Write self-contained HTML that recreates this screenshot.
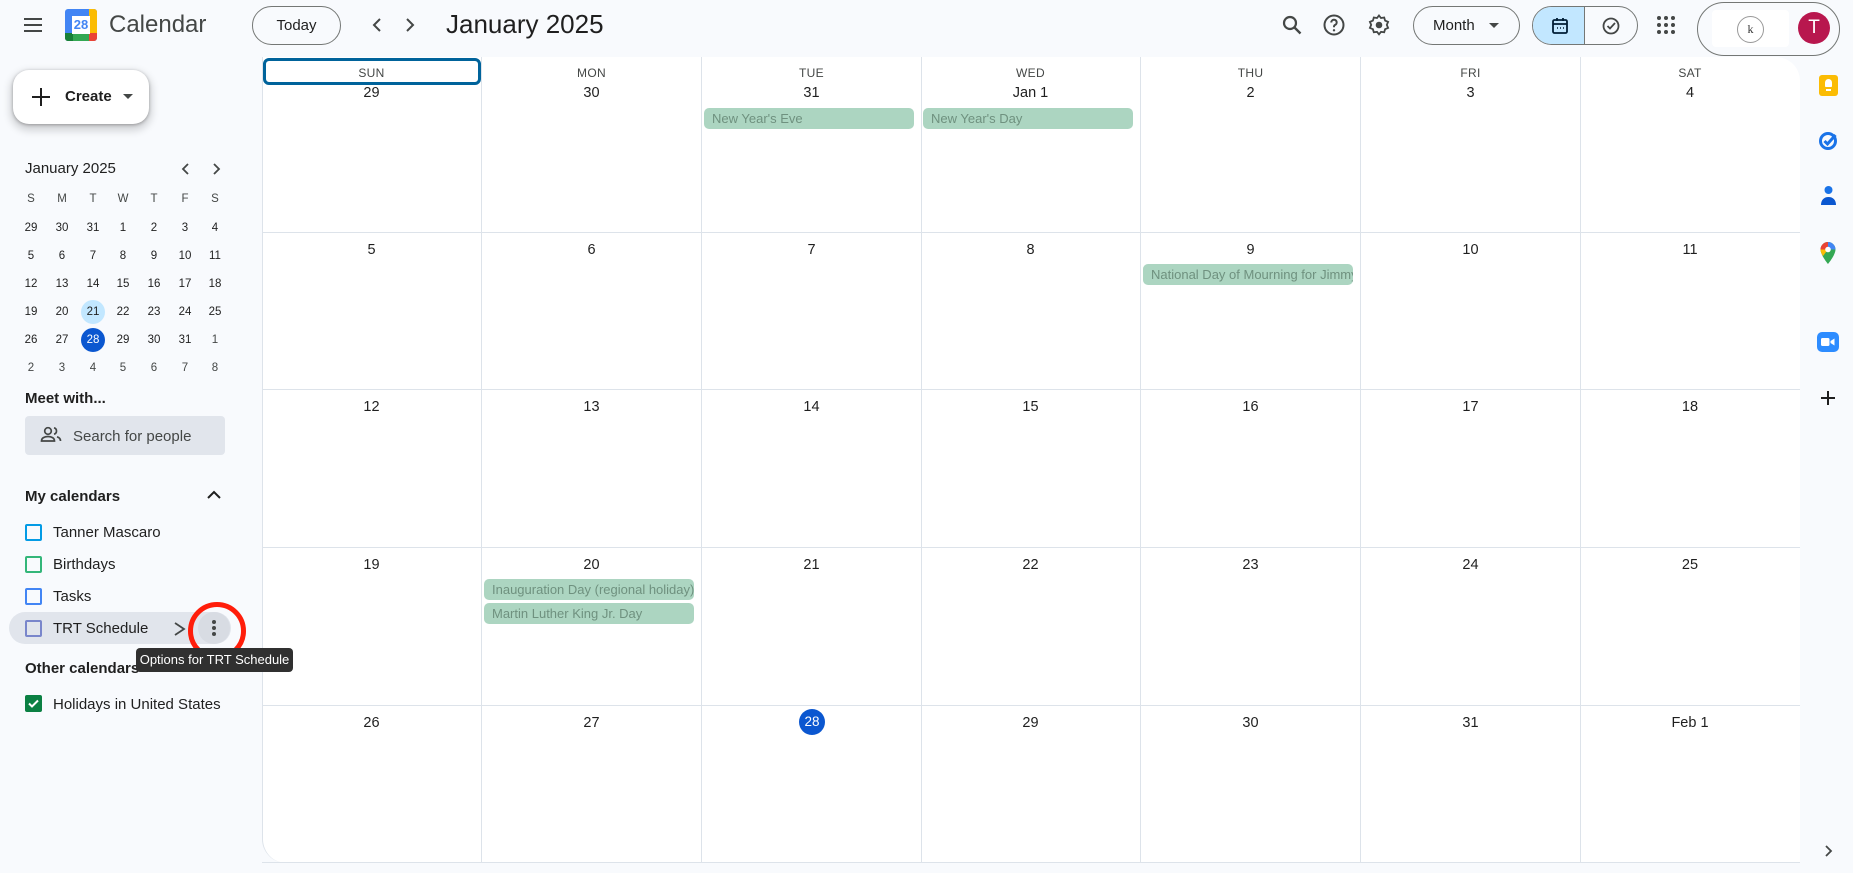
<!DOCTYPE html>
<html><head><meta charset="utf-8"><style>
*{box-sizing:border-box;margin:0;padding:0}
body{width:1853px;height:873px;overflow:hidden;background:#f8fafd;font-family:"Liberation Sans",Arial,sans-serif;color:#1f1f1f;position:relative}
.a{position:absolute}
.btn{position:absolute;border:1px solid #747775;border-radius:20px;display:flex;align-items:center;justify-content:center;font-size:15px;color:#1f1f1f}
.cell{position:absolute;width:220px;border-right:1px solid #dde3ea;border-bottom:1px solid #dde3ea;text-align:center}
.dn{font-size:12px;color:#444746;position:absolute;left:0;right:0;top:9px;letter-spacing:.3px}
.d{font-size:14.5px;position:absolute;left:0;right:0;line-height:20px}
.ev{position:absolute;left:2px;width:210px;height:21px;background:#acd5c1;border-radius:5px;color:#6f917f;font-size:13px;line-height:21px;padding-left:8px;text-align:left;white-space:nowrap;overflow:hidden}
.mc{position:absolute;width:24px;height:24px;line-height:24px;text-align:center;font-size:11.5px;color:#1f1f1f;border-radius:12px}
.mh{position:absolute;width:24px;text-align:center;font-size:11.5px;color:#444746}
.cb{position:absolute;left:25px;width:17px;height:17px;border:2px solid;border-radius:2px}
.cl{position:absolute;left:53px;font-size:15px;color:#1f1f1f}
.sec{position:absolute;left:25px;font-size:15px;font-weight:bold;color:#1f1f1f}
</style></head><body>

<!-- header -->
<svg class="a" style="left:21px;top:13px" width="24" height="24" viewBox="0 0 24 24"><path d="M3 6h18M3 12h18M3 18h18" stroke="#444746" stroke-width="2"/></svg>
<div class="a" style="left:65px;top:9px;width:32px;height:32px;border-radius:3px;overflow:hidden">
<div class="a" style="left:0;top:0;width:32px;height:32px;background:#4285f4"></div>
<div class="a" style="left:24px;top:0;width:8px;height:24px;background:#fbbc04"></div>
<div class="a" style="left:0;top:24px;width:24px;height:8px;background:#34a853"></div>
<div class="a" style="left:0;top:24px;width:8px;height:8px;background:#188038"></div>
<div class="a" style="left:24px;top:24px;width:8px;height:8px;background:#ea4335"></div>
<div class="a" style="left:7px;top:7px;width:18px;height:18px;background:#fff;color:#4285f4;font-size:13px;font-weight:bold;text-align:center;line-height:18px">28</div>
</div>
<div class="a" style="left:109px;top:11px;font-size:24px;color:#444746">Calendar</div>
<div class="btn" style="left:252px;top:6px;width:89px;height:39px">Today</div>
<svg class="a" style="left:367px;top:15px" width="20" height="20" viewBox="0 0 20 20"><path d="M13 4l-6 6 6 6" stroke="#444746" stroke-width="2" fill="none"/></svg>
<svg class="a" style="left:400px;top:15px" width="20" height="20" viewBox="0 0 20 20"><path d="M7 4l6 6-6 6" stroke="#444746" stroke-width="2" fill="none"/></svg>
<div class="a" style="left:446px;top:9px;font-size:26px;color:#1f1f1f">January 2025</div>
<svg class="a" style="left:1280px;top:13px" width="24" height="24" viewBox="0 0 24 24"><circle cx="10" cy="10" r="6" stroke="#444746" stroke-width="2.2" fill="none"/><path d="M14.5 14.5l6 6" stroke="#444746" stroke-width="2.4"/></svg>
<svg class="a" style="left:1322px;top:13px" width="24" height="24" viewBox="0 0 24 24"><circle cx="12" cy="12" r="9.5" stroke="#444746" stroke-width="2" fill="none"/><path d="M9.3 9.5a2.7 2.7 0 1 1 3.8 2.4c-.8.4-1.1 1-1.1 1.8v.6" stroke="#444746" stroke-width="2" fill="none"/><circle cx="12" cy="17.3" r="1.2" fill="#444746"/></svg>
<svg class="a" style="left:1367px;top:13px" width="24" height="24" viewBox="0 0 24 24"><path d="M12 2.5l2 2.5 3.2-.5.9 3.1 3 1.3-1.3 3 1.3 3-3 1.3-.9 3.1-3.2-.5-2 2.5-2-2.5-3.2.5-.9-3.1-3-1.3 1.3-3-1.3-3 3-1.3.9-3.1 3.2.5z" stroke="#444746" stroke-width="1.8" fill="none"/><circle cx="12" cy="12" r="3.3" fill="#444746"/></svg>
<div class="btn" style="left:1413px;top:6px;width:107px;height:39px;justify-content:flex-start;padding-left:19px">Month<svg style="margin-left:14px" width="10" height="6"><path d="M0 0h10L5 5z" fill="#444746"/></svg></div>
<div class="a" style="left:1532px;top:6px;width:106px;height:39px;border:1px solid #747775;border-radius:20px;overflow:hidden">
<div class="a" style="left:0;top:0;width:52px;height:39px;background:#c2e7ff;border-right:1px solid #747775"></div>
<svg class="a" style="left:17px;top:9px" width="20" height="20" viewBox="0 0 20 20"><rect x="3" y="4" width="14" height="13" rx="1.5" stroke="#001d35" stroke-width="1.8" fill="none"/><path d="M3 8h14M7 2v3M13 2v3" stroke="#001d35" stroke-width="1.8"/><path d="M7 12h1M10 12h1M13 12h1" stroke="#001d35" stroke-width="1.4"/></svg>
<svg class="a" style="left:68px;top:9px" width="20" height="20" viewBox="0 0 20 20"><circle cx="10" cy="10" r="7.5" stroke="#444746" stroke-width="1.8" fill="none"/><path d="M6.5 10l2.5 2.5 5-5.5" stroke="#444746" stroke-width="1.8" fill="none"/></svg>
</div>
<svg class="a" style="left:1656px;top:15px" width="20" height="20" viewBox="0 0 20 20"><g fill="#444746"><circle cx="3" cy="3" r="2"/><circle cx="10" cy="3" r="2"/><circle cx="17" cy="3" r="2"/><circle cx="3" cy="10" r="2"/><circle cx="10" cy="10" r="2"/><circle cx="17" cy="10" r="2"/><circle cx="3" cy="17" r="2"/><circle cx="10" cy="17" r="2"/><circle cx="17" cy="17" r="2"/></g></svg>
<div class="a" style="left:1697px;top:2px;width:143px;height:54px;border:1px solid #747775;border-radius:27px"></div>
<div class="a" style="left:1712px;top:10px;width:77px;height:37px;background:#fff;border-radius:4px"></div>
<div class="a" style="left:1737px;top:16px;width:27px;height:27px;border:1px solid #999;border-radius:50%;font-size:12px;text-align:center;line-height:25px;color:#333;font-family:'Liberation Serif',serif">k</div>
<div class="a" style="left:1798px;top:12px;width:32px;height:32px;border-radius:50%;background:#b8174e;color:#fff;font-size:19px;text-align:center;line-height:32px">T</div>

<!-- sidebar -->
<div class="a" style="left:13px;top:70px;width:136px;height:54px;background:#fff;border-radius:16px;box-shadow:0 1px 3px rgba(0,0,0,.3),0 4px 8px 3px rgba(0,0,0,.15)"></div>
<svg class="a" style="left:30px;top:86px" width="22" height="22" viewBox="0 0 22 22"><path d="M11 2v18M2 11h18" stroke="#1f1f1f" stroke-width="2"/></svg>
<div class="a" style="left:65px;top:88px;font-size:15px;font-weight:bold;color:#1f1f1f">Create</div>
<svg class="a" style="left:123px;top:94px" width="10" height="6"><path d="M0 0h10L5 5z" fill="#444746"/></svg>

<div class="a" style="left:25px;top:160px;font-size:15px;color:#1f1f1f">January 2025</div>
<svg class="a" style="left:178px;top:161px" width="16" height="16" viewBox="0 0 16 16"><path d="M10 3L5 8l5 5" stroke="#444746" stroke-width="1.8" fill="none"/></svg>
<svg class="a" style="left:208px;top:161px" width="16" height="16" viewBox="0 0 16 16"><path d="M6 3l5 5-5 5" stroke="#444746" stroke-width="1.8" fill="none"/></svg>
<div class="mh" style="left:19px;top:193px">S</div><div class="mh" style="left:50px;top:193px">M</div><div class="mh" style="left:81px;top:193px">T</div><div class="mh" style="left:111px;top:193px">W</div><div class="mh" style="left:142px;top:193px">T</div><div class="mh" style="left:173px;top:193px">F</div><div class="mh" style="left:203px;top:193px">S</div>
<div class="mc" style="left:19px;top:216px">29</div><div class="mc" style="left:50px;top:216px">30</div><div class="mc" style="left:81px;top:216px">31</div><div class="mc" style="left:111px;top:216px">1</div><div class="mc" style="left:142px;top:216px">2</div><div class="mc" style="left:173px;top:216px">3</div><div class="mc" style="left:203px;top:216px">4</div>
<div class="mc" style="left:19px;top:244px">5</div><div class="mc" style="left:50px;top:244px">6</div><div class="mc" style="left:81px;top:244px">7</div><div class="mc" style="left:111px;top:244px">8</div><div class="mc" style="left:142px;top:244px">9</div><div class="mc" style="left:173px;top:244px">10</div><div class="mc" style="left:203px;top:244px">11</div>
<div class="mc" style="left:19px;top:272px">12</div><div class="mc" style="left:50px;top:272px">13</div><div class="mc" style="left:81px;top:272px">14</div><div class="mc" style="left:111px;top:272px">15</div><div class="mc" style="left:142px;top:272px">16</div><div class="mc" style="left:173px;top:272px">17</div><div class="mc" style="left:203px;top:272px">18</div>
<div class="mc" style="left:19px;top:300px">19</div><div class="mc" style="left:50px;top:300px">20</div><div class="mc" style="left:81px;top:300px;background:#c2e7ff">21</div><div class="mc" style="left:111px;top:300px">22</div><div class="mc" style="left:142px;top:300px">23</div><div class="mc" style="left:173px;top:300px">24</div><div class="mc" style="left:203px;top:300px">25</div>
<div class="mc" style="left:19px;top:328px">26</div><div class="mc" style="left:50px;top:328px">27</div><div class="mc" style="left:81px;top:328px;background:#0b57d0;color:#fff">28</div><div class="mc" style="left:111px;top:328px">29</div><div class="mc" style="left:142px;top:328px">30</div><div class="mc" style="left:173px;top:328px">31</div><div class="mc" style="left:203px;top:328px;color:#444746">1</div>
<div class="mc" style="left:19px;top:356px;color:#444746">2</div><div class="mc" style="left:50px;top:356px;color:#444746">3</div><div class="mc" style="left:81px;top:356px;color:#444746">4</div><div class="mc" style="left:111px;top:356px;color:#444746">5</div><div class="mc" style="left:142px;top:356px;color:#444746">6</div><div class="mc" style="left:173px;top:356px;color:#444746">7</div><div class="mc" style="left:203px;top:356px;color:#444746">8</div>

<div class="sec" style="top:390px">Meet with...</div>
<div class="a" style="left:25px;top:416px;width:200px;height:39px;background:#e1e5ec;border-radius:4px"></div>
<svg class="a" style="left:40px;top:425px" width="22" height="20" viewBox="0 0 22 20"><circle cx="8" cy="6" r="3.3" stroke="#444746" stroke-width="1.7" fill="none"/><path d="M1.5 16c0-3 3-4.5 6.5-4.5s6.5 1.5 6.5 4.5z" stroke="#444746" stroke-width="1.7" fill="none"/><path d="M14 2.8a3.3 3.3 0 0 1 0 6.4M17 11.8c2 .6 3.5 2 3.5 4.2" stroke="#444746" stroke-width="1.7" fill="none"/></svg>
<div class="a" style="left:73px;top:428px;font-size:15px;color:#444746">Search for people</div>

<div class="sec" style="top:488px">My calendars</div>
<svg class="a" style="left:204px;top:487px" width="20" height="16" viewBox="0 0 20 16"><path d="M4 11l6-6 6 6" stroke="#1f1f1f" stroke-width="2" fill="none"/></svg>
<div class="cb" style="top:524px;border-color:#039be5"></div><div class="cl" style="top:524px">Tanner Mascaro</div>
<div class="cb" style="top:556px;border-color:#33b679"></div><div class="cl" style="top:556px">Birthdays</div>
<div class="cb" style="top:588px;border-color:#4285f4"></div><div class="cl" style="top:588px">Tasks</div>
<div class="a" style="left:9px;top:612px;width:222px;height:32px;background:#e1e5ec;border-radius:16px"></div>
<div class="cb" style="top:620px;border-color:#7986cb"></div><div class="cl" style="top:620px">TRT Schedule</div>
<svg class="a" style="left:173px;top:621px" width="14" height="16" viewBox="0 0 14 16"><path d="M2 2l9 6-9 6" stroke="#444746" stroke-width="1.8" fill="none"/></svg>
<div class="a" style="left:198px;top:612px;width:32px;height:32px;border-radius:50%;background:#d8dce3"></div>
<div class="a" style="left:212px;top:620px;width:4px;height:4px;border-radius:2px;background:#444746"></div>
<div class="a" style="left:212px;top:626px;width:4px;height:4px;border-radius:2px;background:#444746"></div>
<div class="a" style="left:212px;top:632px;width:4px;height:4px;border-radius:2px;background:#444746"></div>
<div class="a" style="left:188px;top:602px;width:58px;height:58px;border:5px solid #ff1d0a;border-radius:50%"></div>
<div class="sec" style="top:660px">Other calendars</div>
<div class="a" style="left:25px;top:695px;width:17px;height:17px;background:#0b8043;border-radius:2px"></div>
<svg class="a" style="left:25px;top:695px" width="17" height="17" viewBox="0 0 17 17"><path d="M4 8.5l3 3 6-6" stroke="#fff" stroke-width="2" fill="none"/></svg>
<div class="cl" style="top:696px">Holidays in United States</div>

<!-- grid -->
<div class="a" style="left:262px;top:57px;width:1538px;height:806px;background:#fff;border-radius:0 24px 0 24px;border-left:1px solid #dde3ea"></div>

<div class="cell" style="left:262px;top:57px;height:176px"><div class="dn">SUN</div><div class="d" style="top:26px">29</div></div>
<div class="cell" style="left:482px;top:57px;height:176px"><div class="dn">MON</div><div class="d" style="top:26px">30</div></div>
<div class="cell" style="left:702px;top:57px;height:176px"><div class="dn">TUE</div><div class="d" style="top:26px">31</div><div class="ev" style="top:51px">New Year's Eve</div></div>
<div class="cell" style="left:921px;top:57px;height:176px"><div class="dn">WED</div><div class="d" style="top:26px">Jan 1</div><div class="ev" style="top:51px">New Year's Day</div></div>
<div class="cell" style="left:1141px;top:57px;height:176px"><div class="dn">THU</div><div class="d" style="top:26px">2</div></div>
<div class="cell" style="left:1361px;top:57px;height:176px"><div class="dn">FRI</div><div class="d" style="top:26px">3</div></div>
<div class="cell" style="left:1580px;top:57px;height:176px;border-right:none"><div class="dn">SAT</div><div class="d" style="top:26px">4</div></div>
<div class="a" style="left:263px;top:58px;width:218px;height:27px;border:3px solid #00639b;border-radius:6px"></div>

<div class="cell" style="left:262px;top:233px;height:157px"><div class="d" style="top:7px">5</div></div>
<div class="cell" style="left:482px;top:233px;height:157px"><div class="d" style="top:7px">6</div></div>
<div class="cell" style="left:702px;top:233px;height:157px"><div class="d" style="top:7px">7</div></div>
<div class="cell" style="left:921px;top:233px;height:157px"><div class="d" style="top:7px">8</div></div>
<div class="cell" style="left:1141px;top:233px;height:157px"><div class="d" style="top:7px">9</div><div class="ev" style="top:31px">National Day of Mourning for Jimmy Carter</div></div>
<div class="cell" style="left:1361px;top:233px;height:157px"><div class="d" style="top:7px">10</div></div>
<div class="cell" style="left:1580px;top:233px;height:157px;border-right:none"><div class="d" style="top:7px">11</div></div>

<div class="cell" style="left:262px;top:390px;height:158px"><div class="d" style="top:7px">12</div></div>
<div class="cell" style="left:482px;top:390px;height:158px"><div class="d" style="top:7px">13</div></div>
<div class="cell" style="left:702px;top:390px;height:158px"><div class="d" style="top:7px">14</div></div>
<div class="cell" style="left:921px;top:390px;height:158px"><div class="d" style="top:7px">15</div></div>
<div class="cell" style="left:1141px;top:390px;height:158px"><div class="d" style="top:7px">16</div></div>
<div class="cell" style="left:1361px;top:390px;height:158px"><div class="d" style="top:7px">17</div></div>
<div class="cell" style="left:1580px;top:390px;height:158px;border-right:none"><div class="d" style="top:7px">18</div></div>

<div class="cell" style="left:262px;top:548px;height:158px"><div class="d" style="top:7px">19</div></div>
<div class="cell" style="left:482px;top:548px;height:158px"><div class="d" style="top:7px">20</div><div class="ev" style="top:31px">Inauguration Day (regional holiday)</div><div class="ev" style="top:55px">Martin Luther King Jr. Day</div></div>
<div class="cell" style="left:702px;top:548px;height:158px"><div class="d" style="top:7px">21</div></div>
<div class="cell" style="left:921px;top:548px;height:158px"><div class="d" style="top:7px">22</div></div>
<div class="cell" style="left:1141px;top:548px;height:158px"><div class="d" style="top:7px">23</div></div>
<div class="cell" style="left:1361px;top:548px;height:158px"><div class="d" style="top:7px">24</div></div>
<div class="cell" style="left:1580px;top:548px;height:158px;border-right:none"><div class="d" style="top:7px">25</div></div>

<div class="cell" style="left:262px;top:706px;height:157px"><div class="d" style="top:7px">26</div></div>
<div class="cell" style="left:482px;top:706px;height:157px"><div class="d" style="top:7px">27</div></div>
<div class="cell" style="left:702px;top:706px;height:157px"><div class="a" style="left:97px;top:3px;width:26px;height:26px;border-radius:50%;background:#0b57d0;color:#fff;font-size:13.5px;line-height:26px;text-align:center">28</div></div>
<div class="cell" style="left:921px;top:706px;height:157px"><div class="d" style="top:7px">29</div></div>
<div class="cell" style="left:1141px;top:706px;height:157px"><div class="d" style="top:7px">30</div></div>
<div class="cell" style="left:1361px;top:706px;height:157px"><div class="d" style="top:7px">31</div></div>
<div class="cell" style="left:1580px;top:706px;height:157px;border-right:none"><div class="d" style="top:7px">Feb 1</div></div>

<!-- right rail -->
<div class="a" style="left:1819px;top:75px;width:19px;height:21px;background:#fbbc04;border-radius:3px"></div>
<div class="a" style="left:1825px;top:79px;width:7px;height:8px;background:#fff;border-radius:4px 4px 1px 1px"></div>
<div class="a" style="left:1826px;top:89px;width:5px;height:2px;background:#fff"></div>
<svg class="a" style="left:1818px;top:130px" width="21" height="21" viewBox="0 0 21 21"><circle cx="10" cy="11" r="7.5" stroke="#1a73e8" stroke-width="3" fill="none"/><path d="M6.5 11l3 3 8-9" stroke="#1a73e8" stroke-width="3" fill="none"/></svg>
<svg class="a" style="left:1819px;top:185px" width="19" height="22" viewBox="0 0 19 22"><circle cx="9.5" cy="5" r="4" fill="#1a73e8"/><path d="M2 20c0-5 3-8 7.5-8s7.5 3 7.5 8z" fill="#0b57d0"/></svg>
<svg class="a" style="left:1819px;top:241px" width="18" height="24" viewBox="0 0 18 24"><path d="M9 1a7.5 7.5 0 0 0-7.5 7.5C1.5 14 9 23 9 23s7.5-9 7.5-14.5A7.5 7.5 0 0 0 9 1z" fill="#34a853"/><path d="M9 1a7.5 7.5 0 0 0-7.5 7.5L9 8.5z" fill="#ea4335"/><path d="M9 1a7.5 7.5 0 0 1 7.5 7.5L9 8.5z" fill="#4285f4"/><path d="M1.5 8.5C1.5 11 3 13.5 4 15L9 8.5z" fill="#fbbc04"/><circle cx="9" cy="8.5" r="2.8" fill="#fff"/></svg>
<div class="a" style="left:1817px;top:332px;width:22px;height:20px;background:#2d8cff;border-radius:5px"></div>
<svg class="a" style="left:1821px;top:337px" width="14" height="10" viewBox="0 0 14 10"><rect x="0" y="1" width="8.5" height="8" rx="1.5" fill="#fff"/><path d="M9.5 4l4-2.5v7L9.5 6z" fill="#fff"/></svg>
<svg class="a" style="left:1819px;top:389px" width="18" height="18" viewBox="0 0 18 18"><path d="M9 2v14M2 9h14" stroke="#1f1f1f" stroke-width="2"/></svg>
<svg class="a" style="left:1822px;top:843px" width="14" height="16" viewBox="0 0 14 16"><path d="M4 3l5 5-5 5" stroke="#444746" stroke-width="1.8" fill="none"/></svg>

<!-- tooltip on top -->
<div class="a" style="left:136px;top:648px;width:157px;height:24px;background:#303030;border-radius:4px;color:#fff;font-size:13px;line-height:24px;text-align:center;z-index:10">Options for TRT Schedule</div>
</body></html>
